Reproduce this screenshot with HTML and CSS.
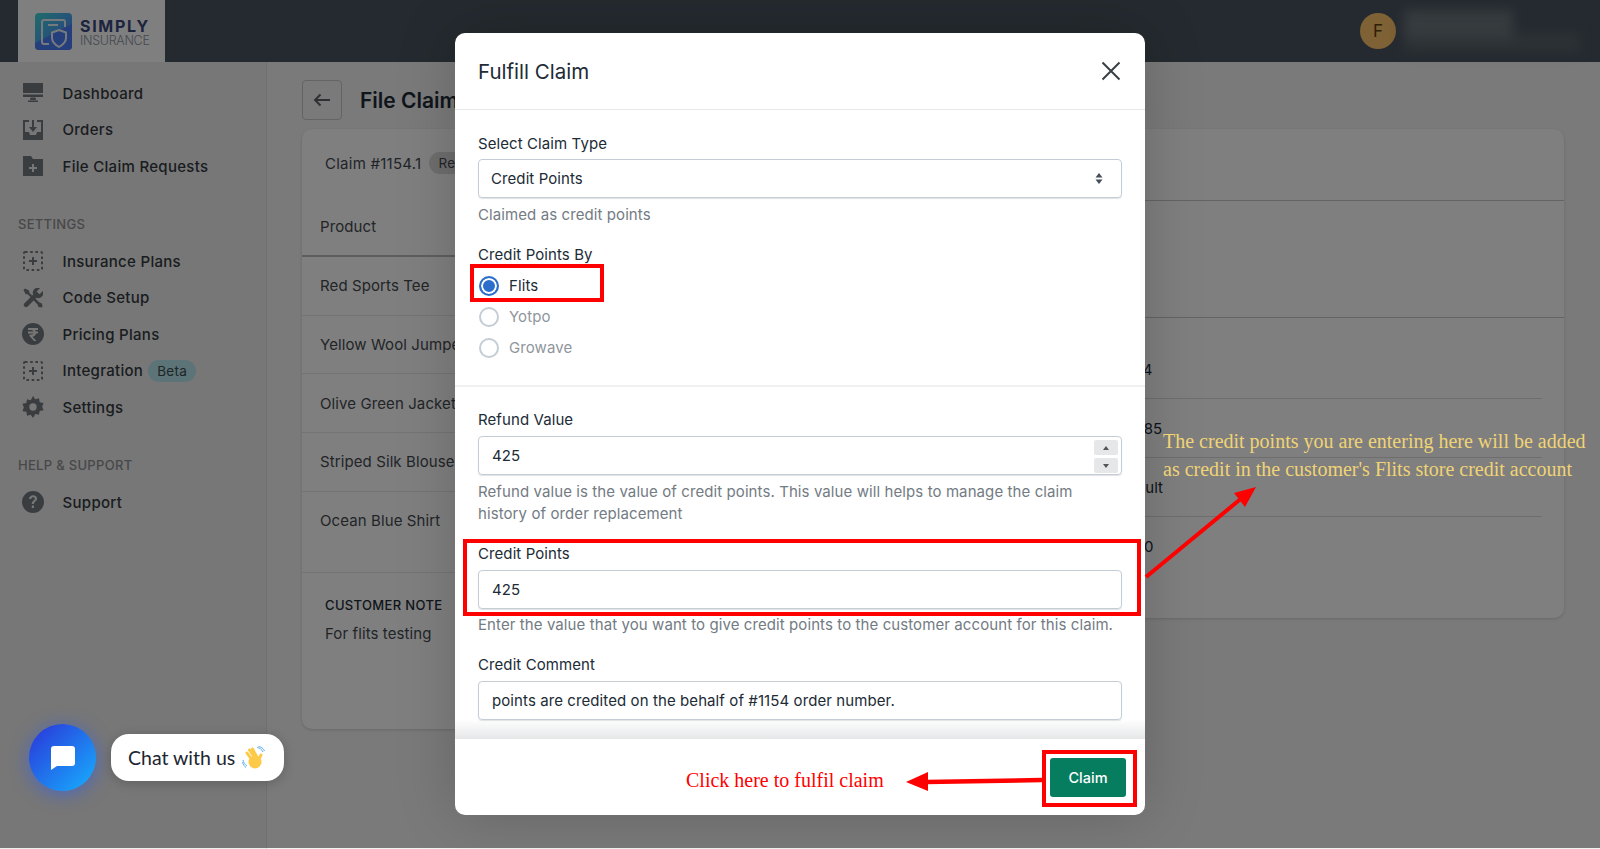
FILE: index.html
```html
<!DOCTYPE html>
<html lang="en">
<head>
<meta charset="utf-8">
<title>Fulfill Claim</title>
<link rel="stylesheet" href="styles.css">
</head>
<body>
<div class="app">
  <header class="topbar">
    <div class="logo">
      <svg class="logo-mark" width="37" height="37" viewBox="0 0 37 37">
        <defs><linearGradient id="lg" x1="0" y1="0" x2="1" y2="1"><stop offset="0" stop-color="#40d8d8"/><stop offset=".5" stop-color="#4aa8f0"/><stop offset="1" stop-color="#5a70f0"/></linearGradient></defs>
        <rect width="37" height="37" rx="4" fill="url(#lg)"/>
        <path d="M0 30 L37 11 V33 a4 4 0 0 1-4 4 H4 a4 4 0 0 1-4-4Z" fill="#4a7cf8"/>
        <path d="M14 31 H9 a2 2 0 0 1-2-2 V9 a2 2 0 0 1 2-2 H28 a2 2 0 0 1 2 2 V14" fill="none" stroke="#eef4f8" stroke-width="2"/>
        <path d="M13 12 h10" stroke="#eef4f8" stroke-width="2"/>
        <path d="M24 17 l7 2.500 v5.500 c0 4-3.500 7-7 9 c-3.500-2-7-5-7-9 v-5.500z" fill="none" stroke="#eef4f8" stroke-width="2"/>
      </svg>
      <div class="logo-text"><span class="logo-a">SIMPLY</span><span class="logo-b">INSURANCE</span></div>
    </div>
    <div class="account">
      <div class="avatar">F</div>
      <div class="blurred"></div>
    </div>
  </header>
  <div class="layout">
    <aside class="sidebar">
      <nav class="nav">
        <a class="item"><svg class="ico" viewBox="0 0 20 20"><path d="M0 0h20v14H0zM0 11.500h20V10H0z" fill-rule="evenodd"/><path d="M7.500 14.500h5l.5 2.500H7zM5 17.500h10V19H5z"/></svg>Dashboard</a>
        <a class="item"><svg class="ico" viewBox="0 0 20 20"><path d="M0 0h6v2H2v10h4l1 3h6l1-3h4V2h-4V0h6v20H0z"/><path d="M9 0h2v7h3l-4 5-4-5h3z"/></svg>Orders</a>
        <a class="item"><svg class="ico" viewBox="0 0 20 20"><path fill-rule="evenodd" d="M0 0h8l2 3h10v17H0zM9 8v3H6v2h3v3h2v-3h3v-2h-3V8z"/></svg>File Claim Requests</a>
      </nav>
      <div class="section-label">SETTINGS</div>
      <nav class="nav">
        <a class="item"><svg class="ico" viewBox="0 0 20 20"><rect x="1" y="1" width="18" height="18" rx="1" fill="none" stroke-width="2" stroke-dasharray="2.6 2.6" class="st"/><path d="M9 6h2v3h3v2h-3v3H9v-3H6V9h3z"/></svg>Insurance Plans</a>
        <a class="item"><svg class="ico" viewBox="0 0 20 20"><path d="M2 .5L.5 2l2 4 2.500.5 9.500 10 1 2.500 3 .5 1-1-.5-3-2.500-1-10-9.500L6 2.500z"/><path d="M19.800 3L16.500 6.300 13.700 3.500 17 .2A5 5 0 0 0 10.200 6.600L1.500 15.300A2.200 2.200 0 0 0 4.700 18.500L13.400 9.800A5 5 0 0 0 19.800 3z"/></svg>Code Setup</a>
        <a class="item"><svg class="ico big" viewBox="0 0 22 22"><path fill-rule="evenodd" d="M11 0a11 11 0 1 0 0 22 11 11 0 0 0 0-22zM6 5h10v2h-3l1 1.500h2v2h-2c-.5 2-2 3-3.500 3.300L14.500 18H12l-4.500-5V11.500H9c1.200 0 2.200-.3 2.700-1H6v-2h5.700C11.200 7.500 10 7 9 7H6z"/></svg>Pricing Plans</a>
        <a class="item"><svg class="ico" viewBox="0 0 20 20"><rect x="1" y="1" width="18" height="18" rx="1" fill="none" stroke-width="2" stroke-dasharray="2.6 2.6" class="st"/><path d="M9 6h2v3h3v2h-3v3H9v-3H6V9h3z"/></svg>Integration<span class="beta">Beta</span></a>
        <a class="item"><svg class="ico big" viewBox="0 0 24 24"><path fill-rule="evenodd" d="M12 0l2.500 3.500 4-1 .8 4.200 4.200.8-1.500 4 1.500 4-4.200.8-.8 4.200-4-1L12 24l-2.500-3.500-4 1-.8-4.200L.5 16.500l1.500-4-1.500-4 4.200-.8.8-4.200 4 1zM12 8a4 4 0 1 0 0 8 4 4 0 0 0 0-8z"/></svg>Settings</a>
      </nav>
      <div class="section-label">HELP &amp; SUPPORT</div>
      <nav class="nav">
        <a class="item"><svg class="ico big" viewBox="0 0 22 22"><path fill-rule="evenodd" d="M11 0a11 11 0 1 0 0 22 11 11 0 0 0 0-22zM7 8c0-5 8-5 8-.500 0 3-3 2.800-3 5.500H9.800c0-3.500 3-3.500 3-5.500 0-1.800-3.500-1.800-3.500.500zM9.800 14.500H12V17H9.800z"/></svg>Support</a>
      </nav>
    </aside>
    <main class="main">
      <div class="title-row">
        <button class="back"><svg width="18" height="14" viewBox="0 0 18 14"><path d="M17 7H2M7.500 1.500L2 7l5.500 5.500" fill="none" stroke-width="2" class="st"/></svg></button>
        <h1 class="page-title">File Claim</h1>
      </div>
      <div class="cards">
        <section class="card left">
          <div class="claim-head">Claim #1154.1<span class="badge">Requested</span></div>
          <div class="thead">Product</div>
          <div class="row">Red Sports Tee</div>
          <div class="row">Yellow Wool Jumper</div>
          <div class="row">Olive Green Jacket</div>
          <div class="row">Striped Silk Blouse</div>
          <div class="row tall">Ocean Blue Shirt</div>
          <div class="note">
            <div class="note-label">CUSTOMER NOTE</div>
            <div class="note-text">For flits testing</div>
          </div>
        </section>
        <section class="card right">
          <div class="r-head"></div>
          <div class="r-sub"></div>
          <div class="r-rows">
            <div class="r-row">#1154</div>
            <div class="r-row">$99.85</div>
            <div class="r-row">Default</div>
            <div class="r-row last">$0.00</div>
          </div>
        </section>
      </div>
    </main>
  </div>
</div>

<div class="overlay"></div>

<div class="chat">
  <div class="chat-btn"><svg width="24" height="24" viewBox="0 0 24 24"><path d="M3 0h18a3 3 0 0 1 3 3v14a3 3 0 0 1-3 3H6l-6 4V3a3 3 0 0 1 3-3z" fill="#fff"/></svg></div>
  <div class="chat-pill">Chat with us
    <svg class="wave" width="24" height="24" viewBox="8 4 24 24">
      <g fill="none" stroke="#fdca47" stroke-width="3" stroke-linecap="round">
        <path d="M13 11l5 7M15.500 8l5 7.500M18.500 7l4 7.500M27 13l-3 5.500"/>
      </g>
      <circle cx="21" cy="20" r="6.500" fill="#fdca47"/>
      <path d="M23 5.500c2.500.2 5 2 6 4.500M24.500 4.500c2.500.3 5 2 6 4.500M9 18c.5 2.500 2 4.500 4 6M8.500 20c.5 2.500 2 4.500 3.500 5.500" fill="none" stroke="#5fb0f0" stroke-width="1"/>
    </svg>
  </div>
</div>

<div class="modal">
  <div class="modal-head">
    <h2 class="modal-title">Fulfill Claim</h2>
    <svg class="close" width="20" height="20" viewBox="0 0 20 20"><path d="M1.500 1.500l17 17M18.500 1.500l-17 17" stroke="#3a3f45" stroke-width="2" fill="none"/></svg>
  </div>
  <div class="modal-body">
    <div class="section first">
      <div class="label">Select Claim Type</div>
      <div class="control select">Credit Points
        <svg class="updown" width="8" height="11" viewBox="0 0 8 11"><path d="M4 0l3.500 4.500h-7zM4 11L.5 6.500h7z" fill="#454f5b"/></svg>
      </div>
      <div class="help">Claimed as credit points</div>
      <div class="label spaced">Credit Points By</div>
      <div class="radios">
        <div class="radio on"><span class="dot"></span>Flits</div>
        <div class="radio off"><span class="dot"></span>Yotpo</div>
        <div class="radio off"><span class="dot"></span>Growave</div>
      </div>
    </div>
    <div class="section fields">
      <div class="label">Refund Value</div>
      <div class="control num">425
        <div class="spin">
          <div class="spin-btn"><svg width="6" height="4" viewBox="0 0 6 4"><path d="M3 0l3 4H0z" fill="#555"/></svg></div>
          <div class="spin-btn"><svg width="6" height="4" viewBox="0 0 6 4"><path d="M3 4l3-4H0z" fill="#555"/></svg></div>
        </div>
      </div>
      <div class="help two wide">Refund value is the value of credit points. This value will helps to manage the claim history of order replacement</div>
      <div class="label spaced">Credit Points</div>
      <div class="control num">425</div>
      <div class="help two">Enter the value that you want to give credit points to the customer account for this claim.</div>
      <div class="label spaced">Credit Comment</div>
      <div class="control num">points are credited on the behalf of #1154 order number.</div>
    </div>
    <div class="fade"></div>
  </div>
  <div class="modal-foot"><button class="claim-btn">Claim</button></div>
</div>

<div class="mark mark-flits"></div>
<div class="mark mark-credit"></div>
<div class="mark mark-claim"></div>
<div class="note-red">Click here to fulfil claim</div>
<div class="note-gold">The credit points you are entering here will be added<br>as credit in the customer's Flits store credit account</div>
<svg class="arrows" width="1600" height="849" viewBox="0 0 1600 849">
  <path d="M1146 577L1243 497" stroke="#ff0000" stroke-width="4"/>
  <path d="M1256 487L1234 493L1245 507z" fill="#ff0000"/>
  <path d="M1042 780L926 782" stroke="#ff0000" stroke-width="4.500"/>
  <path d="M906 782L928 772V791z" fill="#ff0000"/>
</svg>
</body>
</html>
```
FILE: styles.css
```css
* { box-sizing: border-box; }
html, body { margin: 0; height: 100%; }
body {
  width: 1600px;
  height: 849px;
  overflow: hidden;
  background: #f4f4f4;
  font-family: Inter, "Liberation Sans", sans-serif;
  color: #212b36;
}
.app { display: flex; flex-direction: column; height: 849px; }
.topbar {
  height: 62px;
  flex: none;
  background: #48545f;
  display: flex;
  justify-content: space-between;
  padding-left: 18px;
}
.logo {
  width: 147px;
  height: 62px;
  background: #fff;
  display: flex;
  align-items: center;
  gap: 8px;
  padding-left: 17px;
}
.logo-text { display: flex; flex-direction: column; width: 70px; padding-top: 4px; }
.logo-a { font-size: 16px; font-weight: 700; letter-spacing: 1.7px; color: #38497e; line-height: 15px; }
.logo-b { font-size: 12.500px; font-weight: 300; color: #8d94a3; line-height: 13px; letter-spacing: -.3px; }
.account { display: flex; align-items: center; gap: 8px; margin-right: 20px; }
.avatar {
  width: 36px;
  height: 36px;
  border-radius: 50%;
  background: #fcc268;
  color: #5a3f10;
  font-size: 17px;
  display: flex;
  align-items: center;
  justify-content: center;
}
.blurred {
  width: 176px;
  height: 42px;
  background:
    linear-gradient(#6c767c, #6c767c) 0 0 / 62% 70% no-repeat,
    linear-gradient(#58636a, #58636a) 0 100% / 100% 45% no-repeat;
  filter: blur(6px);
}
.layout { flex: 1; display: flex; min-height: 0; }
.sidebar {
  width: 267px;
  flex: none;
  background: #eeeeee;
  border-right: 1px solid #e0e0e0;
  padding-top: 13px;
}
.nav { display: flex; flex-direction: column; }
.item {
  height: 36.500px;
  display: flex;
  align-items: center;
  padding-left: 23px;
  font-size: 15px;
  letter-spacing: .3px;
  font-weight: 500;
  color: #343a40;
}
.ico { width: 20px; height: 20px; margin-right: 19.500px; fill: #757a80; flex: none; }
.ico.big { width: 22px; height: 22px; margin: 0 18.500px 0 -1px; }
.st { stroke: #757a80; }
.back .st { stroke: #5c6166; }
.beta {
  margin-left: 5px;
  height: 22px;
  padding: 0 9px;
  border-radius: 11px;
  background: #b9e8ee;
  font-size: 13.500px;
  font-weight: 400;
  display: flex;
  align-items: center;
  color: #3d4a50;
}
.section-label {
  font-size: 13px;
  font-weight: 500;
  color: #8f9194;
  padding-left: 18px;
  letter-spacing: .3px;
  margin: 31.500px 0 11px;
  line-height: 16px;
}
.main { flex: 1; min-width: 0; padding: 18px 36px 0 35px; }
.title-row { display: flex; align-items: center; gap: 18px; height: 40px; margin-bottom: 9px; }
.back {
  width: 40px;
  height: 40px;
  padding: 0;
  background: #f4f4f4;
  border: 1px solid #c8c8c8;
  border-radius: 4px;
  display: flex;
  align-items: center;
  justify-content: center;
}
.page-title { margin: 0; font-size: 21px; font-weight: 600; color: #212b36; }
.cards { display: grid; grid-template-columns: 690px 1fr; gap: 20px; align-items: start; }
.card {
  background: #fff;
  border-radius: 10px;
  box-shadow: 0 1px 3px rgba(63,63,68,.2);
}
.left { height: 600px; color: #454a50; font-size: 15px; }
.claim-head { height: 68px; display: flex; align-items: center; padding-left: 23px; gap: 8px; font-size: 15px; letter-spacing: .25px; }
.badge {
  height: 22px;
  padding: 0 9px;
  border-radius: 11px;
  background: #dcdcdc;
  font-size: 13.500px;
  display: flex;
  align-items: center;
}
.thead {
  height: 60px;
  display: flex;
  align-items: center;
  padding-left: 18px;
  border-bottom: 2px solid #bcbcbc;
  font-size: 15px;
  letter-spacing: .1px;
}
.row {
  height: 58.700px;
  display: flex;
  align-items: center;
  padding-left: 18px;
  border-bottom: 1px solid #e8e8e8;
  font-size: 15px;
  letter-spacing: .1px;
}
.tall { height: 81px; align-items: flex-start; padding-top: 19px; }
.note { padding: 23px 23px 0; }
.note-label { font-size: 13px; font-weight: 500; color: #212b36; letter-spacing: .35px; line-height: 18px; }
.note-text { font-size: 15px; letter-spacing: .1px; margin-top: 11px; line-height: 18px; }
.right { height: 489px; color: #212b36; font-size: 15px; }
.r-head { height: 72px; border-bottom: 1px solid #c9c9c9; }
.r-sub { height: 117px; border-bottom: 1px solid #c9c9c9; }
.r-rows { padding: 22px 22px 0 100px; }
.r-row {
  height: 59px;
  display: flex;
  align-items: center;
  border-bottom: 1px solid #dcdcdc;
}
.r-row.last { border-bottom: 0; }
.overlay { position: absolute; inset: 0 0 1px 0; background: rgba(0,0,0,.5); }
.chat { position: absolute; left: 29px; top: 724px; display: flex; align-items: center; gap: 15px; }
.chat-btn {
  width: 67px;
  height: 67px;
  border-radius: 50%;
  background: linear-gradient(135deg, #2b33d8, #16b1ff);
  box-shadow: 0 3px 18px rgba(36,90,255,.55);
  display: flex;
  align-items: center;
  justify-content: center;
}
.chat-pill {
  width: 173px;
  height: 47px;
  border-radius: 18px;
  background: #fff;
  box-shadow: 0 2px 12px rgba(0,0,0,.2);
  display: flex;
  align-items: center;
  padding-left: 17px;
  gap: 7px;
  font-family: Lato, sans-serif;
  font-size: 19.500px;
  color: #1c2630;
}
.modal {
  position: absolute;
  left: 455px;
  top: 33px;
  width: 690px;
  height: 782px;
  background: #fff;
  border-radius: 10px;
  overflow: hidden;
  display: flex;
  flex-direction: column;
  box-shadow: 0 0 60px rgba(0,0,0,.18);
}
.modal-head {
  height: 77px;
  flex: none;
  border-bottom: 1px solid #e6e8ea;
  display: flex;
  align-items: center;
  justify-content: space-between;
  padding: 0 24px 0 23px;
}
.modal-title { margin: 0; font-size: 20.500px; font-weight: 400; color: #212b36; }
.modal-body { position: relative; flex: 1; min-height: 0; overflow: hidden; }
.section { padding: 23px 23px 0; font-size: 15px; letter-spacing: .09px; }
.section.first { padding-top: 24px; padding-bottom: 22px; border-bottom: 2px solid #eef0f2; }
.label { line-height: 20px; margin-bottom: 5px; color: #212b36; }
.label.spaced { margin-top: 20px; }
.fields .label { margin-bottom: 6px; }
.fields .label.spaced { margin-top: 19px; }
.control {
  height: 39px;
  border: 1px solid #c4cdd5;
  border-radius: 4px;
  box-shadow: 0 1px 1px rgba(100,110,120,.2);
  display: flex;
  align-items: center;
  position: relative;
  color: #212b36;
}
.select { padding-left: 12px; justify-content: space-between; padding-right: 18px; }
.num { padding-left: 13px; }
.spin {
  position: absolute;
  right: 3px;
  top: 3px;
  display: flex;
  flex-direction: column;
  gap: 3px;
}
.spin-btn {
  width: 24px;
  height: 15px;
  background: #e6e7e8;
  border-radius: 2px;
  display: flex;
  align-items: center;
  justify-content: center;
}
.help { line-height: 20px; margin-top: 7px; color: #737b83; }
.help.two { line-height: 22px; margin-top: 5px; }
.help.two.wide { margin-top: 6px; }
.radios { display: flex; flex-direction: column; padding-left: 1px; }
.radio { height: 31px; display: flex; align-items: center; gap: 10px; }
.radio.off { color: #8f969c; }
.dot { width: 20px; height: 20px; border-radius: 50%; border: 2px solid #c4cdd5; background: #fff; }
.radio.on .dot { border-color: #2c6ecb; box-shadow: inset 0 0 0 2px #fff; background: #2c6ecb; }
.fade {
  position: absolute;
  left: 0;
  right: 0;
  bottom: 0;
  height: 20px;
  background: linear-gradient(rgba(225,227,229,0), #e6e7e8);
}
.modal-foot {
  height: 76px;
  flex: none;
  display: flex;
  justify-content: flex-end;
  padding: 19px 19px 0 0;
  position: relative;
}
.claim-btn {
  width: 76px;
  height: 39px;
  border: 0;
  border-radius: 3px;
  background: #067d5f;
  color: #fff;
  font: 500 14.500px Inter, sans-serif;
}
.mark { position: absolute; border: 4px solid #ff0000; }
.mark-flits { left: 470px; top: 264px; width: 134px; height: 38px; }
.mark-credit { left: 463px; top: 539px; width: 678px; height: 77px; }
.mark-claim { left: 1042px; top: 750px; width: 95px; height: 57px; }
.note-red {
  position: absolute;
  left: 686px;
  top: 767px;
  font: 20px/26px "Liberation Serif", serif;
  color: #ff0000;
}
.note-gold {
  position: absolute;
  left: 1163px;
  top: 427px;
  font: 20px/28px "Liberation Serif", serif;
  color: #efd376;
  white-space: nowrap;
}
.arrows { position: absolute; left: 0; top: 0; pointer-events: none; }
```
